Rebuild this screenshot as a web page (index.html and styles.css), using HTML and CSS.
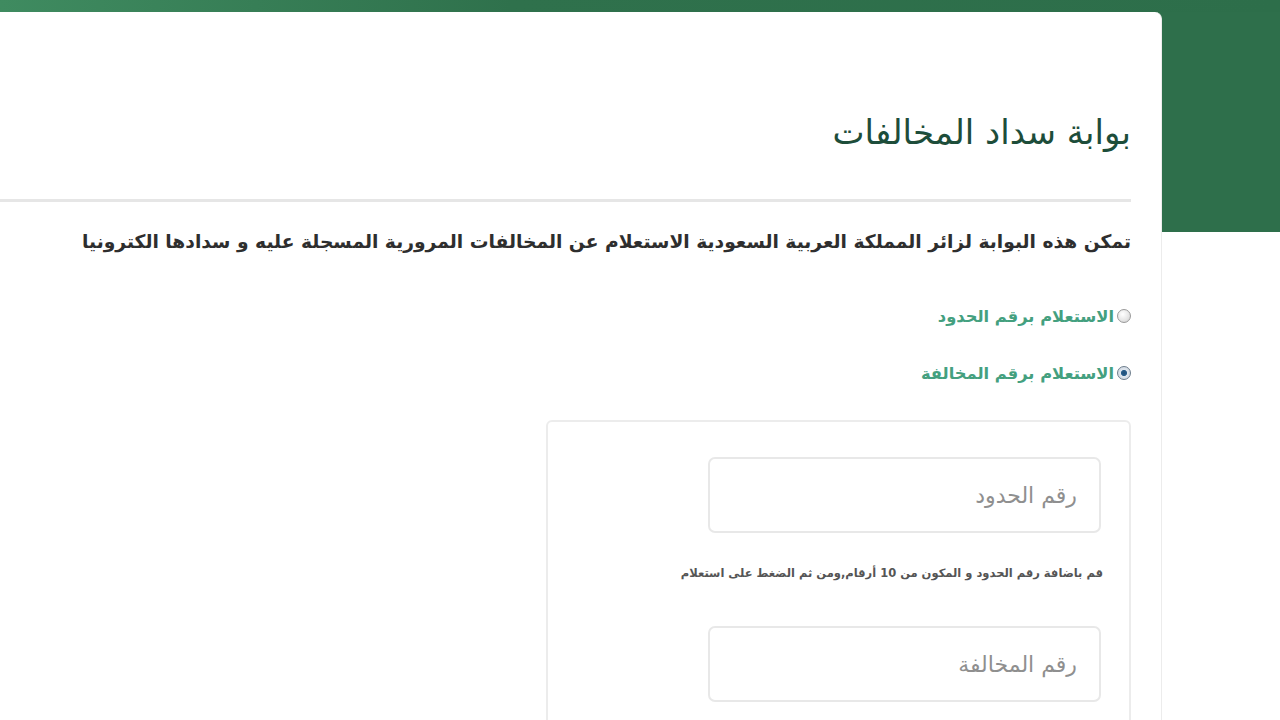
FILE: index.html
```html
<!DOCTYPE html>
<html lang="ar" dir="rtl">
<head>
<meta charset="utf-8">
<title>بوابة سداد المخالفات</title>
<link rel="stylesheet" href="styles.css">
</head>
<body>
<div class="topband"></div>
<div class="layout">
  <main class="card">
    <h1 class="title">بوابة سداد المخالفات</h1>
    <hr class="divider">
    <p class="lead">تمكن هذه البوابة لزائر المملكة العربية السعودية الاستعلام عن المخالفات المرورية المسجلة عليه و سدادها الكترونيا</p>
    <div class="options">
      <label class="option"><span class="radio"></span><span class="option-text">الاستعلام برقم الحدود</span></label>
      <label class="option"><span class="radio checked"></span><span class="option-text">الاستعلام برقم المخالفة</span></label>
    </div>
    <section class="formbox">
      <div class="field">رقم الحدود</div>
      <p class="hint">قم باضافة رقم الحدود و المكون من 10 أرقام,ومن ثم الضغط على استعلام</p>
      <div class="field">رقم المخالفة</div>
    </section>
  </main>
  <aside class="side"></aside>
</div>
</body>
</html>
```

FILE: styles.css
```css
html, body {
  margin: 0;
  padding: 0;
  background: #ffffff;
  height: 720px;
  overflow: hidden;
}
body {
  font-family: "DejaVu Sans", "Noto Sans", sans-serif;
}
.topband {
  height: 12px;
  background: linear-gradient(to left, #2d6e4a 0, #2f714c 60%, #3f8b60 100%);
}
.layout {
  display: flex;
  flex-direction: row;
  direction: ltr;
  background: linear-gradient(#2e6f4b, #2e6f4b) top left / 100% 220px no-repeat;
  height: 708px;
}
.side {
  flex: 1;
}
.card {
  direction: rtl;
  width: 1162px;
  flex: none;
  background: #ffffff;
  border-top-right-radius: 7px;
  border-right: 1px solid #ececec;
  box-sizing: border-box;
  padding: 0 30px 0 0;
  overflow: hidden;
}
.title {
  margin: 96px 0 0 0;
  font-size: 34px;
  line-height: 48px;
  font-weight: normal;
  color: #1d4d3a;
  letter-spacing: -0.5px;
}
.divider {
  margin: 43px 0 0 0;
  border: 0;
  border-top: 3px solid #e6e6e6;
  height: 0;
}
.lead {
  margin: 24px 0 0 0;
  font-size: 18.7px;
  line-height: 32px;
  font-weight: bold;
  color: #2e2e2e;
  white-space: nowrap;
  letter-spacing: -0.6px;
}
.options {
  margin-top: 42px;
  display: flex;
  flex-direction: column;
  gap: 25px;
}
.option {
  display: flex;
  align-items: center;
  gap: 3px;
  height: 32px;
}
.radio {
  width: 14px;
  height: 14px;
  border-radius: 50%;
  border: 1px solid #9a9a9a;
  background: radial-gradient(circle at 40% 35%, #ffffff 0, #e4e4e4 60%, #c8c8c8 100%);
  box-sizing: border-box;
  flex: none;
}
.radio.checked {
  border-color: #6d7d8c;
  background: radial-gradient(circle, #1f4f78 0, #2a5f8c 32%, #dfe6ee 40%, #c9d2dc 100%);
}
.option-text {
  font-size: 16.3px;
  font-weight: bold;
  color: #44a07f;
  letter-spacing: -0.5px;
}
.formbox {
  margin-top: 31px;
  width: 585px;
  height: 320px;
  border: 2px solid #ececec;
  border-radius: 6px;
  box-sizing: border-box;
  padding: 35px 28px 0 0;
}
.field {
  width: 393px;
  height: 76px;
  border: 2px solid #e8e8e8;
  border-radius: 7px;
  box-sizing: border-box;
  padding: 0 22px 0 0;
  display: flex;
  align-items: center;
  font-size: 22px;
  color: #8f8f8f;
  letter-spacing: -0.4px;
}
.hint {
  margin: 30px -2px 0 0;
  font-size: 11.5px;
  line-height: 20px;
  font-weight: bold;
  color: #555555;
  letter-spacing: -0.6px;
  white-space: nowrap;
}
.hint + .field {
  margin-top: 43px;
}
```
